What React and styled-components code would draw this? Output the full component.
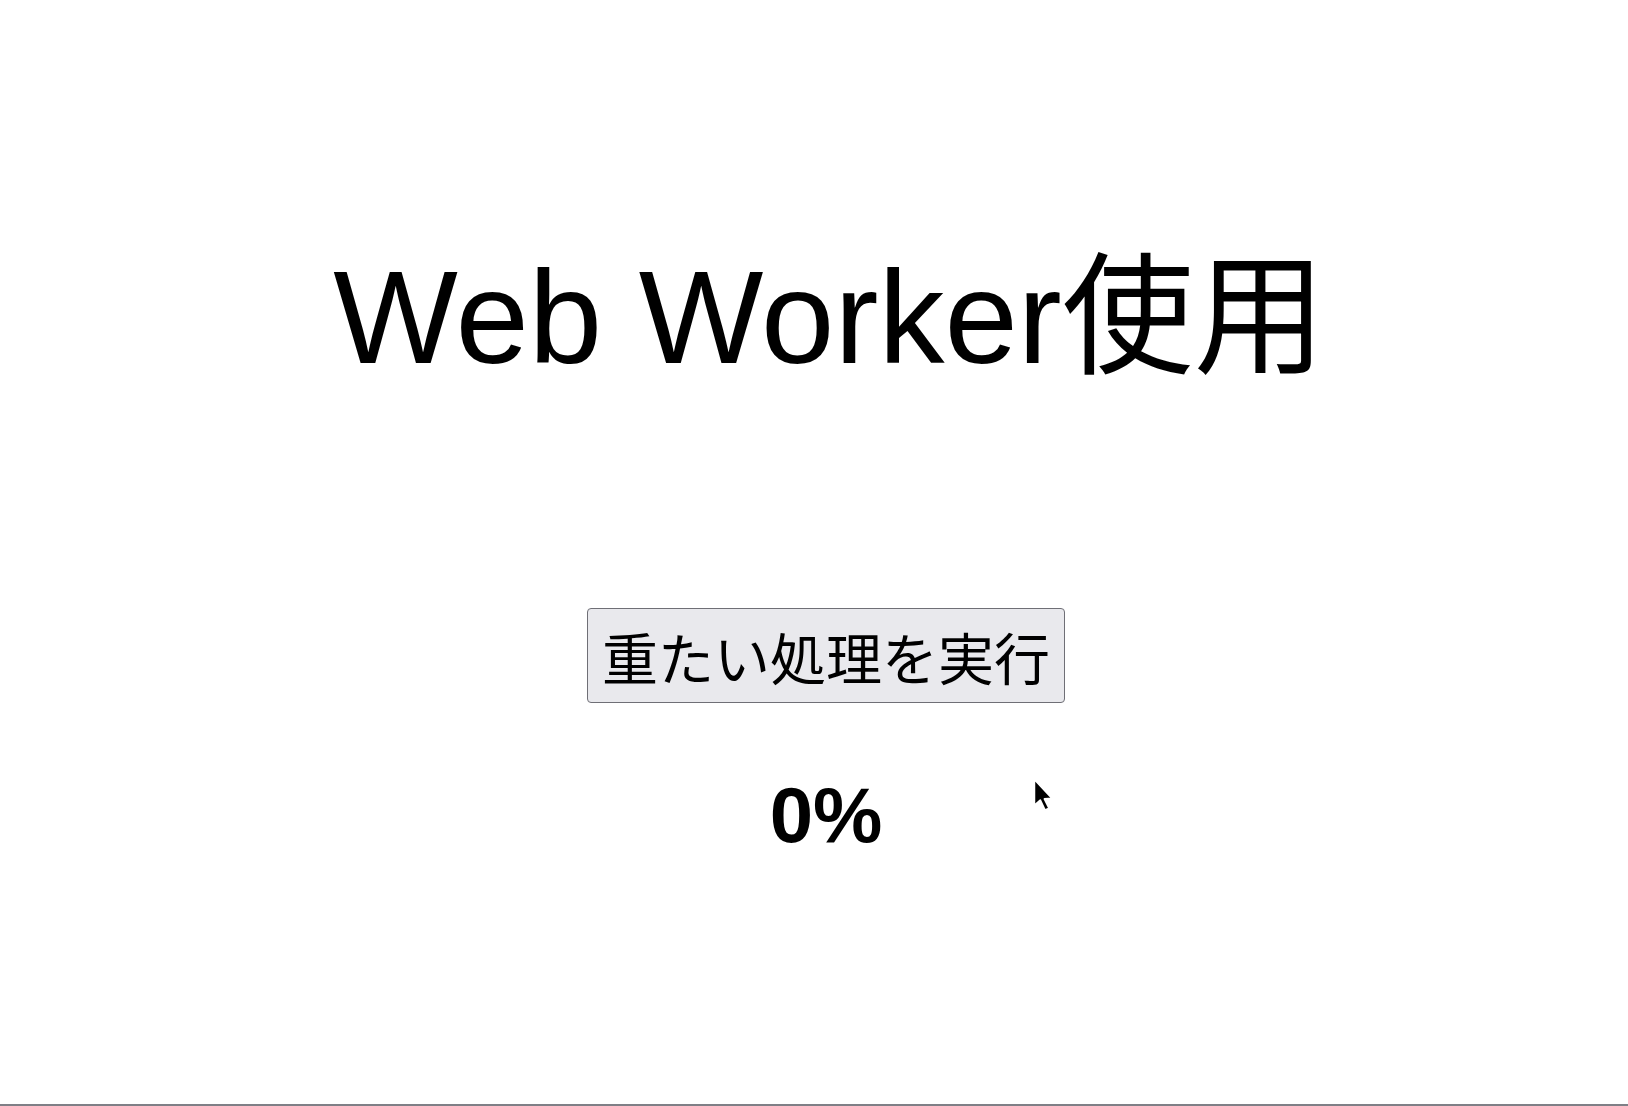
import styled, { createGlobalStyle } from "styled-components";

const GlobalStyle = createGlobalStyle`
  html, body {
    margin: 0;
    padding: 0;
    background: #ffffff;
  }
  body {
    font-family: "Liberation Sans", "Noto Sans CJK JP", sans-serif;
    color: #000;
  }
`;

const Page = styled.main`
  position: relative;
  box-sizing: border-box;
  height: 1106px;
  padding: 252px 0 0 24px;
  display: flex;
  flex-direction: column;
  align-items: center;
  border-bottom: 2px solid #7f7f86;
  overflow: hidden;
`;

const Title = styled.h1`
  margin: 0 0 0 7px;
  font-family: "Liberation Sans", "Noto Sans CJK JP", sans-serif;
  font-size: 132px;
  font-weight: 400;
  line-height: 132px;
  white-space: nowrap;
`;

const RunButton = styled.button`
  margin-top: 224px;
  box-sizing: border-box;
  height: 95px;
  padding: 0 14px;
  font-family: "Noto Sans CJK JP", sans-serif;
  font-size: 56px;
  line-height: 1;
  color: #000;
  background: #e9e9ed;
  border: 1px solid #6f6f76;
  border-radius: 4px;
  cursor: default;
`;

const Progress = styled.h2`
  margin: 72px 0 0;
  font-family: "Liberation Sans", sans-serif;
  font-size: 78px;
  font-weight: 700;
  line-height: 80px;
`;

const Pointer = styled.svg`
  position: absolute;
  left: 1032px;
  top: 777px;
  width: 26px;
  height: 38px;
`;

export default function App() {
  return (
    <>
      <GlobalStyle />
      <Page>
        <Title>Web Worker使用</Title>
        <RunButton type="button">重たい処理を実行</RunButton>
        <Progress>0%</Progress>
        <Pointer viewBox="0 0 22 32">
          <path
            d="M2 2 L2 24 L7 19.5 L11 28 L14.5 26.5 L10.5 18.5 L17 18 Z"
            fill="#000"
            stroke="#fff"
            strokeWidth="1.5"
            strokeLinejoin="round"
          />
        </Pointer>
      </Page>
    </>
  );
}
